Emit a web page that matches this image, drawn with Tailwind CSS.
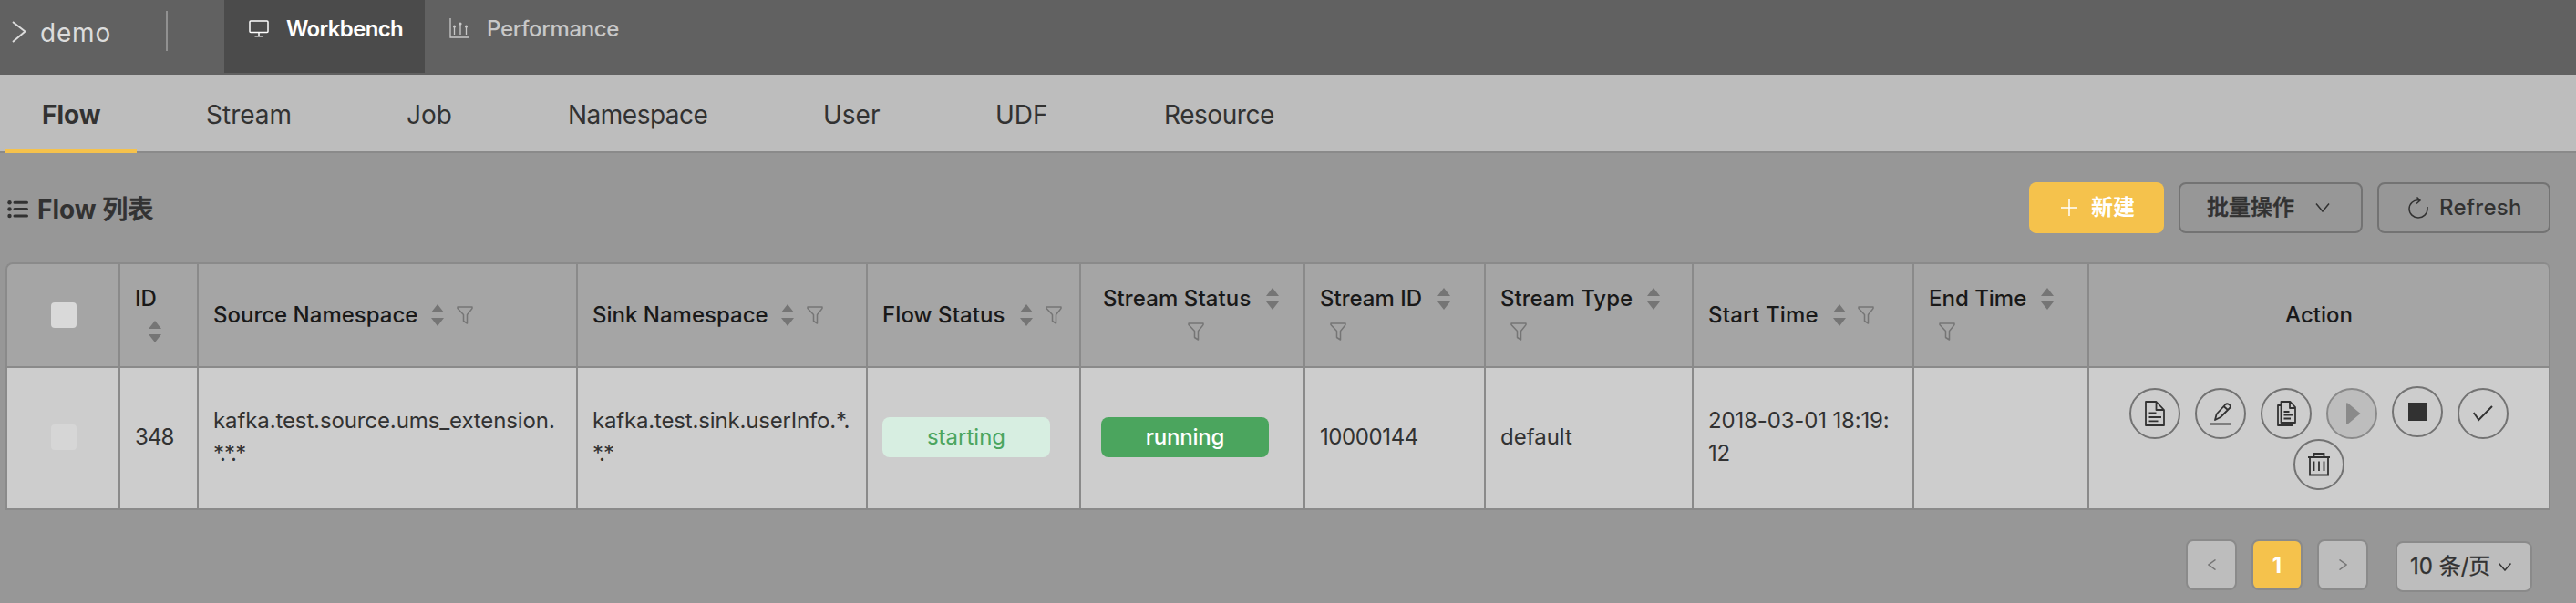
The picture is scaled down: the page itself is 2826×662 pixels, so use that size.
<!DOCTYPE html>
<html lang="zh">
<head>
<meta charset="utf-8">
<title>Workbench</title>
<script src="https://cdn.jsdelivr.net/npm/@tailwindcss/browser@4"></script>
</head>
<body class="w-[2826px] h-[662px] overflow-hidden bg-[#979797] text-[#323232] font-['Inter','Noto_Sans_CJK_SC',sans-serif] text-[24px] leading-9">
<svg class="hidden">
  <symbol id="sort" viewBox="0 0 14 24"><path fill="#757575" d="M0 9 7 0l7 9zM0 15h14l-7 9z"/></symbol>
  <symbol id="filter" viewBox="0 0 18 20"><path fill="none" stroke="#757575" stroke-width="1.5" stroke-linejoin="round" d="M1 1h16v1.600L11.500 9.500V19L7.500 16.500V9.500L1 2.600z"/></symbol>
</svg>

<header class="h-[82px] bg-[#616161] flex items-start">
  <svg class="w-4 h-6 ml-[13px] mt-[23px]" viewBox="0 0 16 24" fill="none" stroke="#dcdcdc" stroke-width="2"><path d="M1 1l13.500 10.500L1 23"/></svg>
  <span class="w-[78px] ml-[15px] mt-[18px] text-[28px] tracking-[.8px] text-[#dcdcdc]">demo</span>
  <span class="w-0.5 h-11 ml-[60px] mt-3 bg-[#919191]"></span>
  <div class="w-[220px] h-20 ml-[62px] bg-[#4b4b4b] text-white font-semibold flex">
    <svg class="w-[22px] h-[19px] ml-[27px] mt-[22px]" viewBox="0 0 22 19" fill="none" stroke="#fff" stroke-width="1.500"><rect x="1" y="1" width="20" height="12.500" rx="1"/><path d="M11 13.500v4M6.500 17.700h9"/></svg>
    <span class="ml-[19px] mt-[14px] tracking-[-.65px] whitespace-nowrap">Workbench</span>
  </div>
  <div class="flex text-[#c8c8c8] font-medium">
    <svg class="w-[22px] h-[22px] ml-[27px] mt-5" viewBox="0 0 22 22" fill="none" stroke="#c8c8c8" stroke-width="1.300"><path d="M1 0v21h21M5.500 18V9M12 18V6M18.500 18V9"/><g fill="#c8c8c8" stroke="none"><circle cx="5.500" cy="9" r="1.600"/><circle cx="12" cy="6" r="1.600"/><circle cx="18.500" cy="9" r="1.600"/></g></svg>
    <span class="ml-[19px] mt-[14px] tracking-[-.35px]">Performance</span>
  </div>
</header>

<nav class="h-[86px] bg-[#bdbdbd] border-b-2 border-[#8a8a8a] flex text-[28px] leading-[88px] pl-[6px] whitespace-nowrap">
  <span class="w-36 h-[86px] border-b-4 border-[#f5c24c] font-bold pl-10">Flow</span>
  <span class="ml-[76px] w-[220px]">Stream</span>
  <span class="w-[177px]">Job</span>
  <span class="w-[280px] tracking-[-.5px]">Namespace</span>
  <span class="w-[189px]">User</span>
  <span class="w-[185px]">UDF</span>
  <span class="tracking-[-.45px]">Resource</span>
</nav>

<div class="h-[120px] pt-8 pl-2 pr-7 flex">
  <svg class="w-[23px] h-5 mt-5" viewBox="0 0 23 20" stroke="#323232" stroke-width="3" stroke-linecap="round"><path d="M8 2.200h13.500M8 9.500h13.500M8 17h13.500"/><g fill="#323232" stroke="none"><circle cx="2.500" cy="2.200" r="2.200"/><circle cx="2.500" cy="9.500" r="2.200"/><circle cx="2.500" cy="17" r="2.200"/></g></svg>
  <h1 class="text-[28px] font-bold ml-[10px] mt-3">Flow <span class="font-medium [-webkit-text-stroke:.7px_#323232]">列表</span></h1>
  <div class="ml-auto flex gap-4 h-14">
    <button class="w-[148px] rounded-lg bg-[#f5c24c] text-white font-bold flex items-center pl-[35px]">
      <svg class="w-[18px] h-[18px] mr-[15px]" viewBox="0 0 18 18" stroke="#fff" stroke-width="1.500"><path d="M9 0v18M0 9h18"/></svg>新建</button>
    <button class="w-[202px] rounded-lg border-2 border-[#737373] font-medium flex items-center pl-[29px]"><span class="[-webkit-text-stroke:.5px_#323232]">批量操作</span>
      <svg class="w-4 h-[10px] ml-[23px]" viewBox="0 0 16 10" fill="none" stroke="#323232" stroke-width="1.500"><path d="M1 .5l7 8.500L15 .5"/></svg></button>
    <button class="w-[190px] rounded-lg border-2 border-[#737373] font-medium flex items-center pl-8">
      <svg class="w-[22px] h-6 mr-3" viewBox="0 0 22 24" fill="none" stroke="#323232" stroke-width="1.500"><path d="M12 4C5.500 3 1 7.800 1 13.300a10 9.700 0 0 0 20 0V11M9.500 .5L13 4 9 7.500"/></svg><span class="tracking-[.3px]">Refresh</span></button>
  </div>
</div>

<table class="table-fixed w-[2792px] ml-[6px] border-separate border-spacing-0 border-l-2 border-t-2 border-[#8a8a8a] rounded-t-lg [&_td]:border-r-2 [&_td]:border-b-2 [&_td]:border-[#8a8a8a] [&_td]:px-4 [&_td]:pb-0.5 [&_th]:border-r-2 [&_th]:border-b-2 [&_th]:border-[#8a8a8a] [&_th]:px-4 [&_th]:text-left [&_th]:font-medium [&_th]:text-[#191919] [&_th]:whitespace-nowrap">
  <colgroup><col class="w-[124px]"><col class="w-[86px]"><col class="w-[416px]"><col class="w-[318px]"><col class="w-[234px]"><col class="w-[246px]"><col class="w-[198px]"><col class="w-[228px]"><col class="w-[242px]"><col class="w-[192px]"><col class="w-[506px]"></colgroup>
  <thead><tr class="h-[114px] bg-[#a5a5a5]">
    <th class="rounded-tl-md"><div class="w-7 h-7 ml-8 bg-[#d9d9d9] rounded"></div></th>
    <th><div>ID</div><div class="h-9 flex items-center pl-[15px]"><svg class="w-[14px] h-6"><use href="#sort"/></svg></div></th>
    <th><div class="flex items-center"><span>Source Namespace</span><svg class="w-[14px] h-6 ml-[15px]"><use href="#sort"/></svg><svg class="w-[18px] h-5 ml-[14px]"><use href="#filter"/></svg></div></th>
    <th><div class="flex items-center"><span>Sink Namespace</span><svg class="w-[14px] h-6 ml-[14px]"><use href="#sort"/></svg><svg class="w-[18px] h-5 ml-[14px]"><use href="#filter"/></svg></div></th>
    <th><div class="flex items-center"><span class="tracking-[.1px]">Flow Status</span><svg class="w-[14px] h-6 ml-4"><use href="#sort"/></svg><svg class="w-[18px] h-5 ml-[14px]"><use href="#filter"/></svg></div></th>
    <th><div class="flex items-center pl-2"><span class="tracking-[.1px]">Stream Status</span><svg class="w-[14px] h-6 ml-[17px]"><use href="#sort"/></svg></div><div class="h-9 flex items-center pl-[101px]"><svg class="w-[18px] h-5"><use href="#filter"/></svg></div></th>
    <th><div class="flex items-center"><span>Stream ID</span><svg class="w-[14px] h-6 ml-[17px]"><use href="#sort"/></svg></div><div class="h-9 flex items-center pl-[11px]"><svg class="w-[18px] h-5"><use href="#filter"/></svg></div></th>
    <th><div class="flex items-center"><span>Stream Type</span><svg class="w-[14px] h-6 ml-4"><use href="#sort"/></svg></div><div class="h-9 flex items-center pl-[11px]"><svg class="w-[18px] h-5"><use href="#filter"/></svg></div></th>
    <th><div class="flex items-center"><span class="tracking-[.2px]">Start Time</span><svg class="w-[14px] h-6 ml-4"><use href="#sort"/></svg><svg class="w-[18px] h-5 ml-[13px]"><use href="#filter"/></svg></div></th>
    <th><div class="flex items-center"><span>End Time</span><svg class="w-[14px] h-6 ml-4"><use href="#sort"/></svg></div><div class="h-9 flex items-center pl-[11px]"><svg class="w-[18px] h-5"><use href="#filter"/></svg></div></th>
    <th class="rounded-tr-md"><div class="text-center">Action</div></th>
  </tr></thead>
  <tbody><tr class="h-[156px] bg-[#cdcdcd]">
    <td><div class="w-7 h-7 ml-8 bg-[#d6d6d6] rounded"></div></td>
    <td class="tracking-[-.9px]">348</td>
    <td class="tracking-[-.11px]">kafka.test.source.ums_extension.<br><span class="tracking-[-1.8px]">*.*.*</span></td>
    <td class="tracking-[-.17px]">kafka.test.sink.userInfo.*.<br><span class="tracking-[-1.8px]">*.*</span></td>
    <td><div class="w-[184px] h-11 rounded-lg bg-[#d7eee1] text-[#4ba55e] text-center leading-11">starting</div></td>
    <td><div class="w-[184px] h-11 ml-1.5 rounded-lg bg-[#4ba55e] text-white font-medium text-center leading-11 tracking-[-.2px]">running</div></td>
    <td class="tracking-[-.4px]">10000144</td>
    <td>default</td>
    <td class="tracking-[-.15px]">2018-03-01 18:19:<br>12</td>
    <td></td>
    <td>
      <div class="flex flex-wrap justify-center gap-x-4 w-[416px] mx-auto mt-1 [&>span]:w-14 [&>span]:h-14 [&>span]:rounded-full [&>span]:border-2 [&>span]:border-[#737373] [&>span]:flex [&>span]:items-center [&>span]:justify-center">
        <span><svg class="w-[22px] h-7" viewBox="0 0 22 28" fill="none" stroke="#323232" stroke-width="1.800" stroke-linejoin="round"><path d="M1 1h11.500L21 10v17H1zM12.500 1v9H21M4.500 13.500h8M4.500 18h13.500M4.500 22.300h10"/></svg></span>
        <span><svg class="w-6 h-[26px]" viewBox="0 0 24 26" fill="none" stroke="#323232" stroke-width="1.800" stroke-linejoin="round"><path d="M0 24.500h24M6 20l1.700-6.500L17.500 3c2-2 6.500 1 5 3.500L12 17zM15.500 5l4.500 4"/></svg></span>
        <span><svg class="w-[21px] h-7" viewBox="0 0 21 28" fill="none" stroke="#323232" stroke-width="1.800" stroke-linejoin="round"><path d="M4.500 1h10L20 7v17H4.500zM14 1v7h6M4.500 5H1v22h15.500v-3M7.500 12h6M7.500 15.700h10M7.500 19.500h7.500"/></svg></span>
        <span class="bg-[#bdbdbd] border-[#8a8a8a]!"><svg class="w-4 h-6 ml-1" viewBox="0 0 16 24"><path fill="#8a8a8a" d="M0 1.500C0 0 1 0 2 .8L15.500 12 2 23.200C1 24 0 24 0 22.500z"/></svg></span>
        <span class="-mt-0.5"><i class="w-5 h-5 bg-[#323232]"></i></span>
        <span><svg class="w-[22px] h-[18px]" viewBox="0 0 22 18" fill="none" stroke="#323232" stroke-width="2"><path d="M.800 8l5.500 8L21 1"/></svg></span>
        <span><svg class="w-6 h-[26px]" viewBox="0 0 24 26" fill="none" stroke="#323232" stroke-width="1.800"><path d="M0 5h24M6.500 5V1h11v4M2 5v19.500h20V5M6.500 9.500v10.500M12 9.500v10.500M17.500 9.500v10.500"/></svg></span>
      </div>
    </td>
  </tr></tbody>
</table>

<div class="flex justify-end pr-[48px] pt-8">
  <div class="w-[56px] h-[56px] bg-[#bdbdbd] border-2 border-[#8a8a8a] rounded-lg flex items-center justify-center"><svg class="w-[9px] h-3" viewBox="0 0 9 12" fill="none" stroke="#757575" stroke-width="1.500"><path d="M8.500 .5L1 6l7.500 5.500"/></svg></div>
  <div class="w-[56px] h-[56px] ml-4 bg-[#f5c24c] border-2 border-[#8a8a8a] rounded-lg text-center text-white font-bold leading-[54px]">1</div>
  <div class="w-[56px] h-[56px] ml-4 bg-[#bdbdbd] border-2 border-[#8a8a8a] rounded-lg flex items-center justify-center"><svg class="w-[9px] h-3" viewBox="0 0 9 12" fill="none" stroke="#757575" stroke-width="1.500"><path d="M.5 .5L8 6 .5 11.500"/></svg></div>
  <div class="w-[150px] h-[56px] mt-0.5 ml-[30px] bg-[#bdbdbd] border-2 border-[#8a8a8a] rounded-lg flex items-center pl-[14px] whitespace-nowrap"><span class="[-webkit-text-stroke:.3px_#323232]">10 条/页</span><svg class="w-[14px] h-[9px] ml-[9px]" viewBox="0 0 14 9" fill="none" stroke="#323232" stroke-width="1.500"><path d="M.5 .5L7 8l6.500-7.500"/></svg></div>
</div>
</body>
</html>
